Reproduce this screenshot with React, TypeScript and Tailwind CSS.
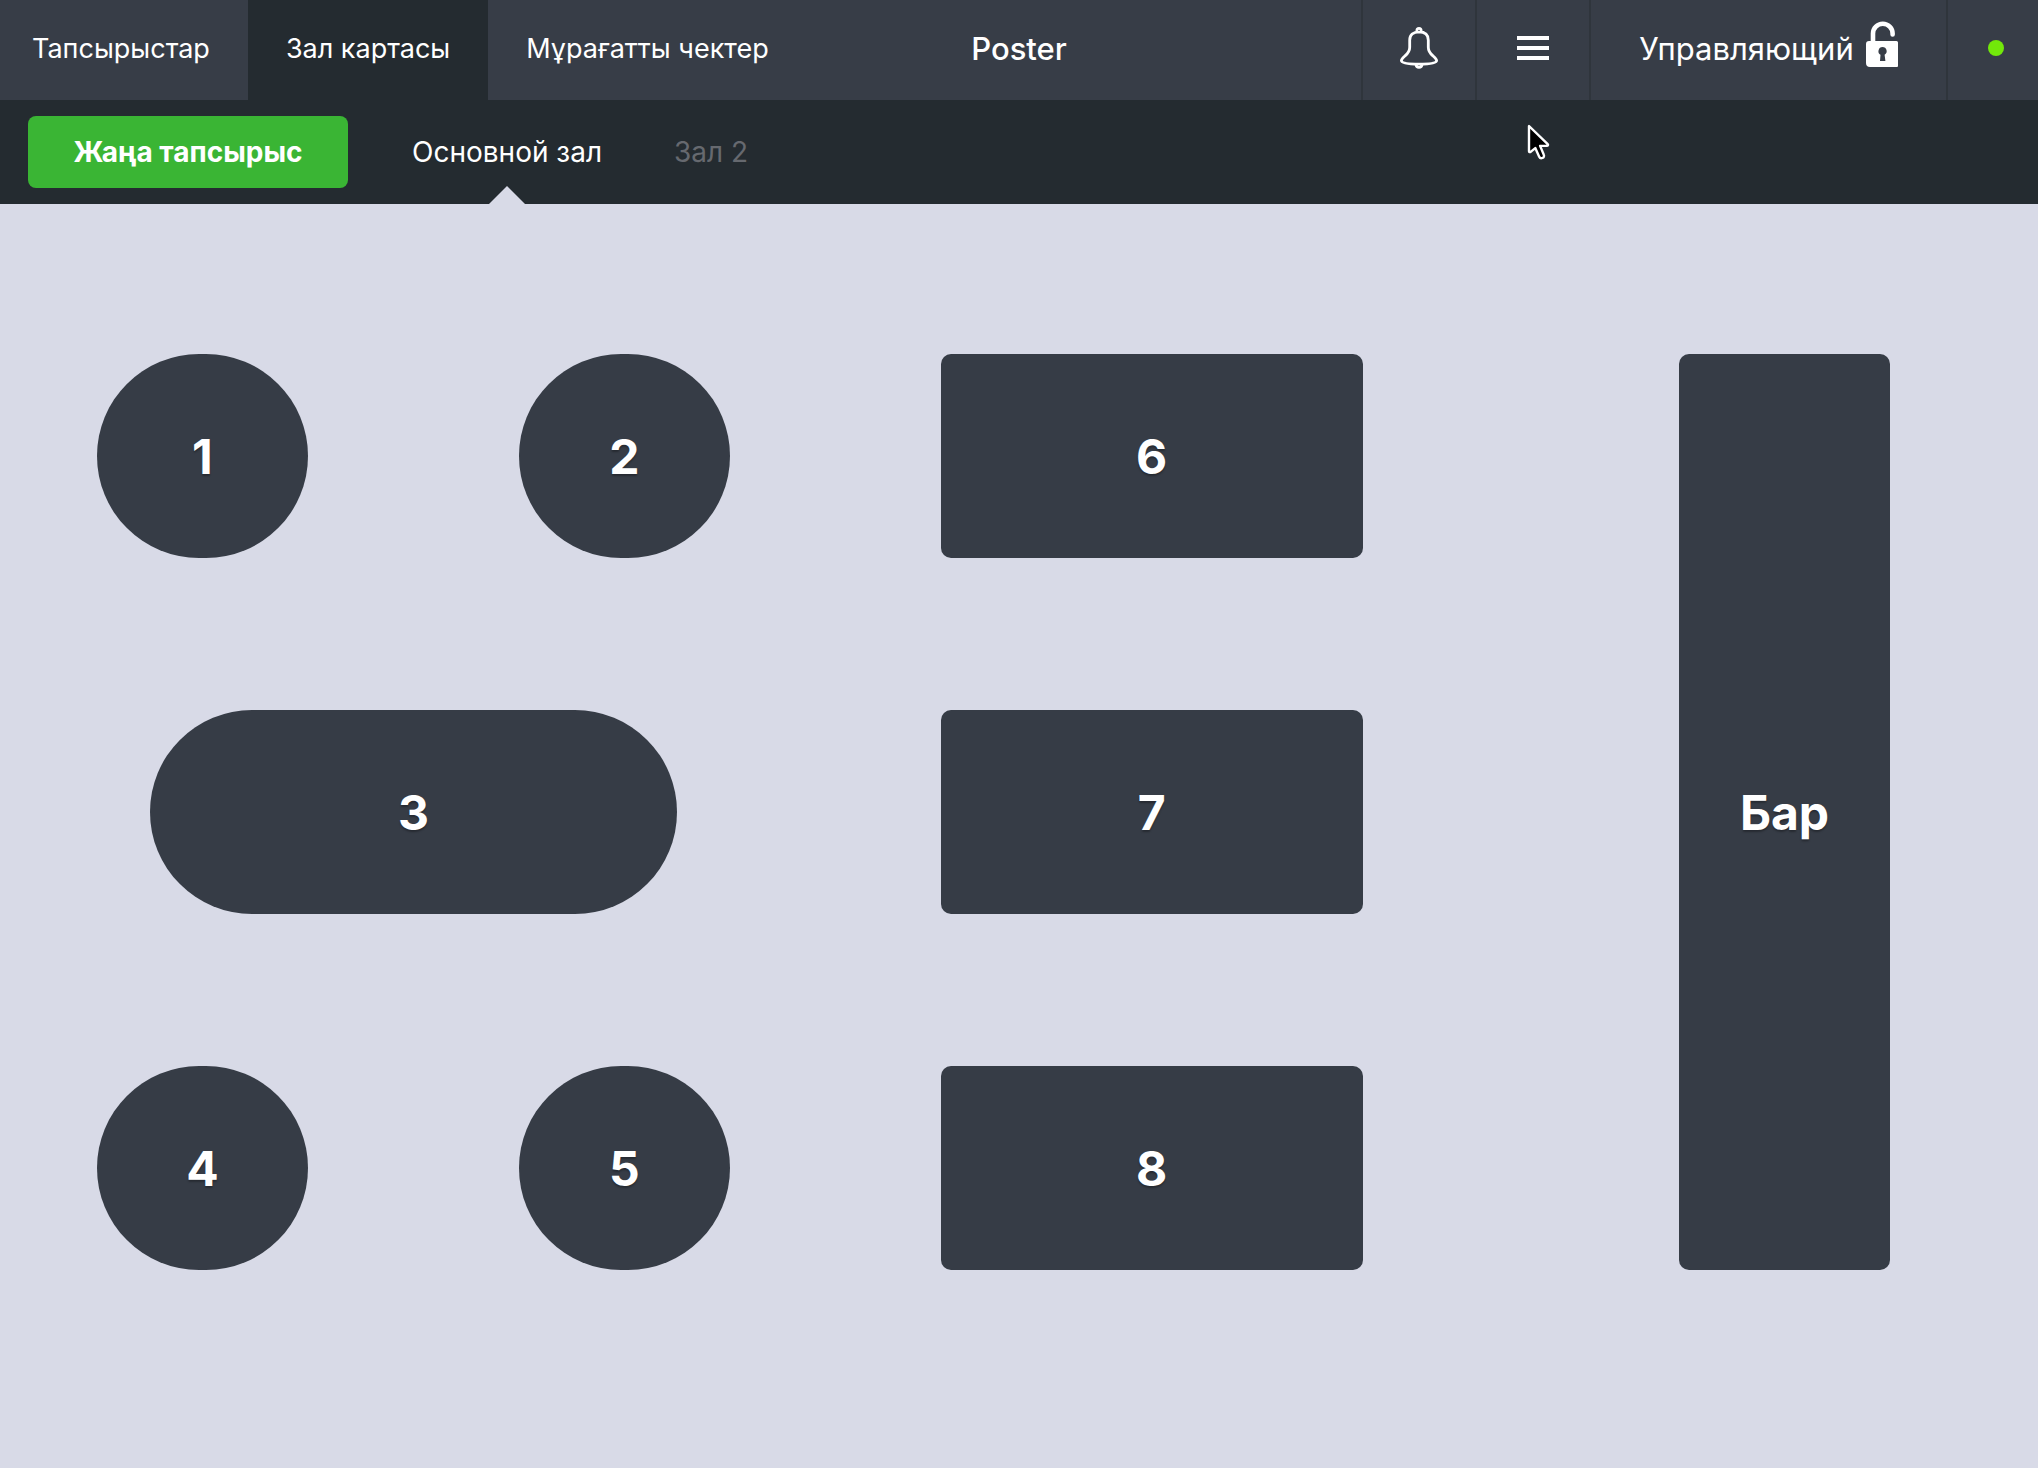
import { useState } from "react";

type Table = {
  name: string;
  shape: "round" | "square";
  col: number;
  row: number;
  w: number;
  h: number;
};

const navTabs = ["Тапсырыстар", "Зал картасы", "Мұрағатты чектер"];

const halls = ["Основной зал", "Зал 2"];

// positions are in cells of the 34 x 18 hall grid
const tables: Table[] = [
  { name: "1", shape: "round", col: 1, row: 1, w: 4, h: 4 },
  { name: "2", shape: "round", col: 9, row: 1, w: 4, h: 4 },
  { name: "6", shape: "square", col: 17, row: 1, w: 8, h: 4 },
  { name: "3", shape: "round", col: 2, row: 8, w: 10, h: 4 },
  { name: "7", shape: "square", col: 17, row: 8, w: 8, h: 4 },
  { name: "4", shape: "round", col: 1, row: 15, w: 4, h: 4 },
  { name: "5", shape: "round", col: 9, row: 15, w: 4, h: 4 },
  { name: "8", shape: "square", col: 17, row: 15, w: 8, h: 4 },
  { name: "Бар", shape: "square", col: 31, row: 1, w: 4, h: 18 },
];

const BellIcon = () => (
  <svg width="40" height="44" viewBox="0 0 40 44" fill="none" stroke="white" strokeWidth="2.8" aria-hidden="true">
    <path d="M20 5.800c-6 0-9.300 3.200-9.300 8.400v7c0 4-1.400 5.800-4.400 8.400-2.400 2.100-3.900 3.200-3.900 5 0 2.600 7 3.600 17.600 3.600s17.600-1 17.600-3.600c0-1.800-1.500-2.900-3.900-5-3-2.600-4.400-4.400-4.400-8.400v-7c0-5.200-3.300-8.400-9.300-8.400z" />
    <path d="M17.900 5.500v-1a2.100 2.100 0 0 1 4.200 0v1M17 38.500c.2 1.800 1.400 2.800 3 2.800s2.800-1 3-2.800" />
  </svg>
);

const MenuIcon = () => (
  <svg width="32" height="24" viewBox="0 0 32 24" fill="white" aria-hidden="true">
    <path d="M0 0h32v4H0zM0 10h32v4H0zM0 20h32v4H0z" />
  </svg>
);

const UnlockIcon = () => (
  <svg width="32" height="46" viewBox="0 0 32 46" aria-hidden="true">
    <path d="M7 22v-9.500a9.800 9.800 0 0 1 19.600 0v1" fill="none" stroke="white" strokeWidth="4.600" strokeLinecap="round" />
    <path
      fill="white"
      fillRule="evenodd"
      d="M3 20h27.500q1.500 0 1.500 1.500V45q0 1-1 1H4q-4 0-4-4V23q0-3 3-3zM16.500 26a4.200 4.200 0 0 0-2 7.800L14 40h5.400l-.8-6.200a4.200 4.200 0 0 0-2.100-7.800z"
    />
  </svg>
);

const Cursor = () => (
  <svg className="pointer-events-none absolute top-[123px] left-[1526px]" width="26" height="40" viewBox="0 0 26 40" aria-hidden="true">
    <path
      d="M3 3v25.200c0 .8.900 1.200 1.600.7l4.700-3.800 3.900 8.600c.6 1.300 1.900 1.800 3.200 1.300 1.400-.6 2-1.900 1.400-3.200l-3.700-8.900h6.700c1.200 0 1.600-1.100.9-1.800z"
      fill="black"
      stroke="white"
      strokeWidth="2.4"
      strokeLinejoin="round"
    />
  </svg>
);

const Header = () => {
  const [active, setActive] = useState("Зал картасы");

  return (
    <header className="flex h-[100px] bg-[#373d47] text-white">
      <nav className="flex flex-1">
        {navTabs.map((tab) => (
          <button
            key={tab}
            onClick={() => setActive(tab)}
            className={`px-[38px] pb-0.5 text-[27px] whitespace-nowrap first:pl-8 ${
              active === tab ? "bg-[#242b30]" : ""
            }`}
          >
            {tab}
          </button>
        ))}
      </nav>

      <h1 className="flex items-center pb-0.5 text-[31px] font-medium">Poster</h1>

      <div className="flex flex-1 justify-end">
        <button aria-label="Notifications" className="flex w-[114px] items-center justify-center border-l-2 border-[#2f353c] pb-1">
          <BellIcon />
        </button>
        <button aria-label="Menu" className="flex w-[114px] items-center justify-center border-l-2 border-[#2f353c] pb-1">
          <MenuIcon />
        </button>
        <button className="flex w-[357px] items-center justify-center gap-3 border-l-2 border-[#2f353c] pb-0.5">
          <span className="text-[31px]">Управляющий</span>
          <span className="pb-2.5">
            <UnlockIcon />
          </span>
        </button>
        <div className="flex w-[92px] items-center border-l-2 border-[#2f353c] pb-1 pl-10">
          <span className="size-4 rounded-full bg-[#72e80a]" />
        </div>
      </div>
    </header>
  );
};

const HallBar = () => {
  const [hall, setHall] = useState("Основной зал");

  return (
    <div className="flex h-[104px] items-center gap-7 bg-[#242b30] pl-7">
      <button className="h-[72px] w-80 rounded-lg bg-[#3ab534] text-[28px] font-bold text-white">
        Жаңа тапсырыс
      </button>

      <nav className="flex h-full">
        {halls.map((name) => (
          <button
            key={name}
            onClick={() => setHall(name)}
            className={`relative px-9 text-[28px] ${hall === name ? "text-white" : "text-[#66696f]"}`}
          >
            {name}
            {/* arrow under the selected hall */}
            {hall === name && (
              <svg className="absolute bottom-0 left-1/2 -translate-x-1/2" width="36" height="18" viewBox="0 0 36 18" aria-hidden="true">
                <path d="M18 0l18 18H0z" fill="#d8dae7" />
              </svg>
            )}
          </button>
        ))}
      </nav>
    </div>
  );
};

const HallMap = () => (
  <main className="grid flex-1 grid-cols-[repeat(34,minmax(0,1fr))] grid-rows-[repeat(18,minmax(0,1fr))] pt-[150px] pr-[148px] pb-[198px] pl-[97px]">
    {tables.map((t) => (
      <button
        key={t.name}
        style={{ gridColumn: `${t.col} / span ${t.w}`, gridRow: `${t.row} / span ${t.h}` }}
        className={`bg-[#363c46] pt-0.5 text-5xl font-bold text-white [text-shadow:0_2px_2px_rgba(0,0,0,0.3)] ${
          t.shape === "round" ? "rounded-full" : "rounded-[10px]"
        }`}
      >
        {t.name}
      </button>
    ))}
  </main>
);

const App = () => {
  return (
    <div className="relative flex min-h-screen flex-col bg-[#d8dae7] font-['Inter',sans-serif]">
      <Header />
      <HallBar />
      <HallMap />
      <Cursor />
    </div>
  );
};

export default App;
